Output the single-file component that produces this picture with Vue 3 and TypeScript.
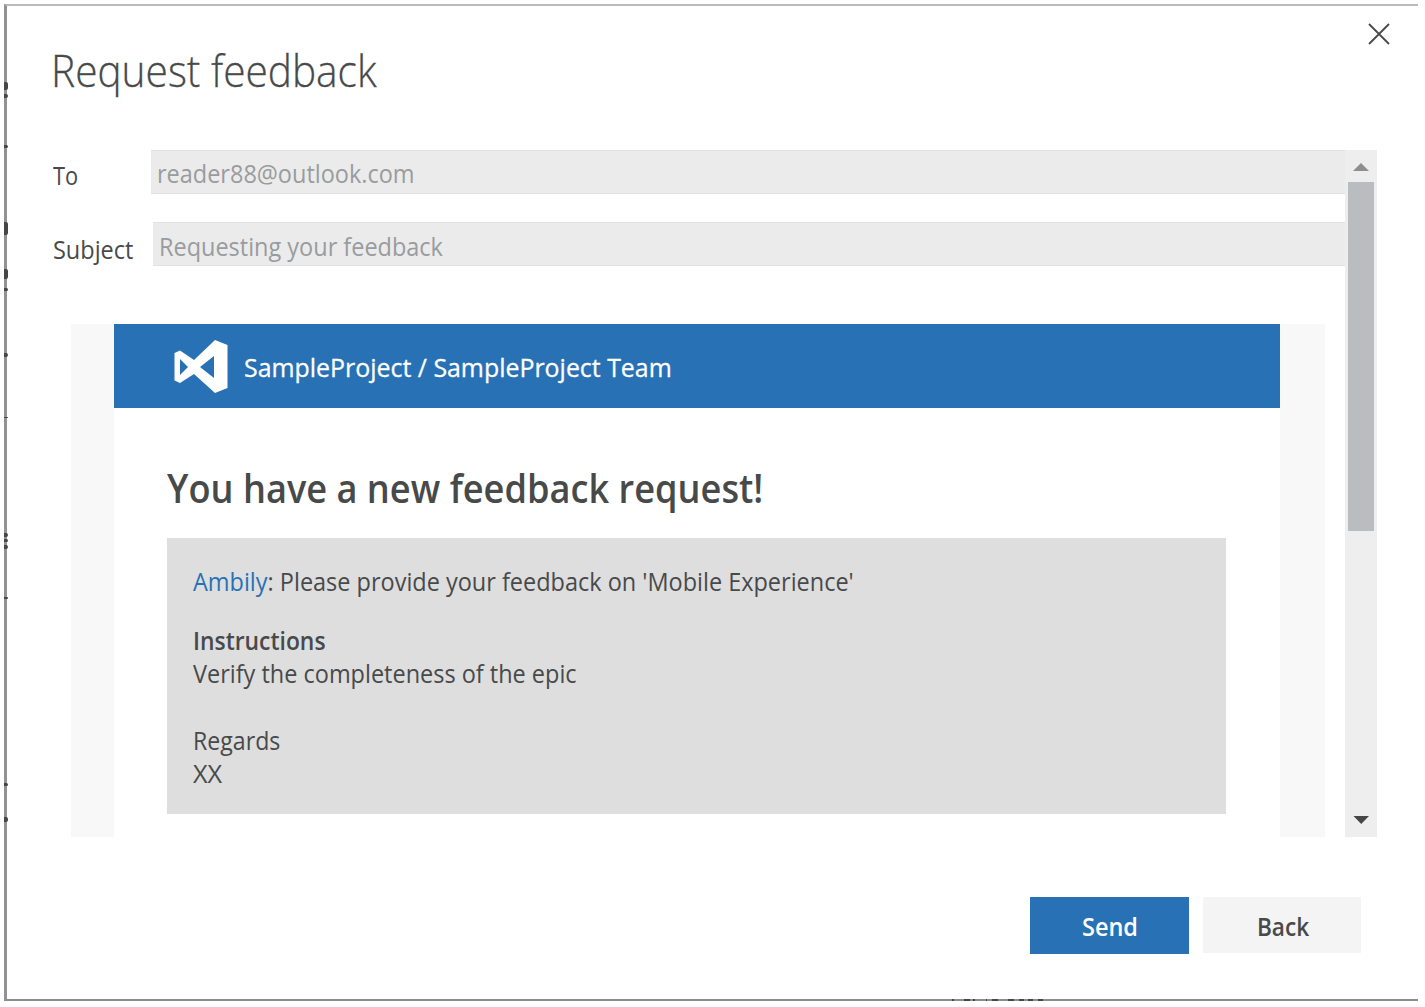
<script setup lang="ts">
interface Field { label: string; value: string; key: string }

const fields: Field[] = [
  { label: 'To', value: 'reader88@outlook.com', key: 'to' },
  { label: 'Subject', value: 'Requesting your feedback', key: 'subject' },
]

// Fragments of the page behind the dialog, peeking out at its edges
const leftMarks = [
  { y: 82, h: 8 }, { y: 94, h: 4 }, { y: 145, h: 3 }, { y: 222, h: 13 },
  { y: 269, h: 10 }, { y: 288, h: 3 }, { y: 353, h: 4 }, { y: 417, h: 1 },
  { y: 533, h: 4 }, { y: 539, h: 3 }, { y: 545, h: 4 }, { y: 597, h: 2 },
  { y: 783, h: 3 }, { y: 817, h: 5 },
]
const bottomMarks = [
  { x: 952, w: 2 }, { x: 964, w: 6 }, { x: 973, w: 2 }, { x: 986, w: 1 }, { x: 992, w: 6 },
  { x: 1008, w: 6 }, { x: 1019, w: 5 }, { x: 1028, w: 5 }, { x: 1038, w: 5 },
]
</script>

<template>
  <div class="page">
    <i v-for="m in leftMarks" :key="'l' + m.y" class="mark left" :style="{ top: m.y + 'px', height: m.h + 'px' }"></i>
    <i v-for="m in bottomMarks" :key="'b' + m.x" class="mark bottom" :style="{ left: m.x + 'px', width: m.w + 'px' }"></i>
    <section class="dialog">
      <header class="head">
        <h1><span class="fit title">Request feedback</span></h1>
        <button class="close" aria-label="Close">
          <svg width="22" height="22" viewBox="0 0 22 22"><path d="M1 1 21 21M21 1 1 21" stroke="#484a4a" stroke-width="1.8" fill="none" /></svg>
        </button>
      </header>

      <div class="viewport">
        <div class="content">
          <div v-for="f in fields" :key="f.key" class="row" :class="f.key">
            <label><span class="fit">{{ f.label }}</span></label>
            <div class="field"><span class="fit">{{ f.value }}</span></div>
          </div>

          <div class="mail">
            <article>
              <div class="banner">
                <svg width="54" height="53" viewBox="0 0 54 53">
                  <path fill="#fff" fill-rule="evenodd" d="M41 0 53.500 5V48L41 53 20 34 6 43 .5 40.500V13L6 10.500 20 20ZM40 16 26 27 40 38ZM6 19V35L14 27Z" />
                </svg>
                <span class="fit project">SampleProject / SampleProject Team</span>
              </div>
              <div class="body">
                <h2><span class="fit heading">You have a new feedback request!</span></h2>
                <div class="card">
                  <p class="ask"><span class="fit request"><a>Ambily</a>: Please provide your feedback on 'Mobile Experience'</span></p>
                  <p class="strong"><span class="fit instructions">Instructions</span></p>
                  <p><span class="fit verify">Verify the completeness of the epic</span></p>
                  <p class="regards"><span class="fit reg">Regards</span></p>
                  <p><span class="fit xx">XX</span></p>
                </div>
              </div>
            </article>
          </div>
        </div>
        <div class="scrollbar">
          <svg class="up" width="32" height="31" viewBox="0 0 32 31"><path d="M8 21 16 13 24 21Z" fill="#8c8e8f" /></svg>
          <div class="thumb"></div>
          <svg class="down" width="32" height="31" viewBox="0 0 32 31"><path d="M8.500 10H24L16.200 18Z" fill="#454747" /></svg>
        </div>
      </div>

      <footer>
        <button class="send"><span class="fit">Send</span></button>
        <button class="back"><span class="fit">Back</span></button>
      </footer>
    </section>
  </div>
</template>

<style>
body { margin: 0; background: #fff; overflow: hidden; }
</style>

<style scoped>
* { box-sizing: border-box; }
.page {
  position: relative; width: 1425px; height: 1007px; padding: 4px 7px 6px 4px;
  background: #fff; color: #484a4a; font: 26px/33.4px "Open Sans", "Noto Sans", sans-serif;
}
.mark { position: absolute; background: #454747; z-index: 1; }
.mark.left { left: 4px; width: 4px; border-radius: 0 2px 2px 0; }
.mark.bottom { top: 999px; height: 2px; }
.dialog {
  display: flex; flex-direction: column; height: 997px;
  border-left: 3px solid #909293; border-top: 2px solid #b9bbbd; border-bottom: 2px solid #8c8e8e;
}
h1, h2, p { margin: 0; font-weight: 400; white-space: nowrap; }
button { border: 0; padding: 0; font: inherit; color: inherit; background: none; }
.fit { display: inline-block; transform-origin: 0 50%; white-space: nowrap; transform: scaleX(.903); }
.head { display: flex; justify-content: space-between; align-items: flex-start; height: 144px; padding: 17px 28px 0 44px; }
h1 { font-size: 44px; line-height: 60px; font-weight: 300; padding-top: 17px; -webkit-text-stroke: .3px #484a4a; }
.close { display: flex; }
.viewport { display: flex; height: 687px; margin: 0 41px 0 45px; }
.content { flex: none; width: 1293px; }
.row { display: flex; height: 44px; }
.row label { width: 99px; padding: 3px 0 0 1px; line-height: 44px; }
.field { flex: 1; padding: 1px 0 0 6px; line-height: 42px; background: #ebebeb; color: #999c9e; border-top: 1px solid #e2e2e2; border-bottom: 1px solid #e2e2e2; }
.to label .fit { transform: scaleX(.84); }
.subject { margin-top: 28px; }
.subject label { width: 101px; padding-top: 5px; }
.subject .field { padding-top: 2px; }
.mail { margin: 58px 20px 0 19px; height: 513px; padding: 0 45px 0 43px; background: #f8f8f8; overflow: hidden; }
article { height: 513px; background: #fff; }
.banner { display: flex; align-items: center; height: 84px; padding-left: 60px; background: #2871b5; color: #fff; }
.banner svg { margin-right: 16px; }
.body { padding: 55px 54px 0 53px; }
h2 { font-size: 39px; line-height: 50px; font-weight: 600; }
.card { margin-top: 25px; height: 276px; padding: 27px 26px; background: #dedede; }
.card a { color: #2871b5; }
.ask { margin-bottom: 25.4px; }
.strong { font-weight: 600; }
.regards { margin-top: 33.4px; }
.scrollbar { display: flex; flex-direction: column; width: 32px; background: #eeeeee; }
.scrollbar svg { display: block; flex: none; }
.thumb { height: 349px; margin: 1px 3px auto; background: #b9bdc0; }
footer { display: flex; justify-content: flex-end; gap: 14px; padding: 60px 57px 0 0; font-weight: 600; }
footer button { width: 159px; height: 57px; padding-top: 3px; }
.send { background: #2871b5; color: #fff; }
footer .back { width: 158px; height: 56px; padding: 4px 0 0 2px; background: #f4f4f4; }
footer .fit { transform-origin: 50% 50%; }
.back .fit { transform: scaleX(.87); }
.project { padding-top: 3px; transform: scaleX(.958); -webkit-text-stroke: .3px #fff; }
.title { transform: scaleX(.923); }
.heading { transform: scaleX(.928); }
.instructions { transform: scaleX(.88); }
.reg { transform: scaleX(.89); }
.xx { transform: scaleX(.97); }
</style>
